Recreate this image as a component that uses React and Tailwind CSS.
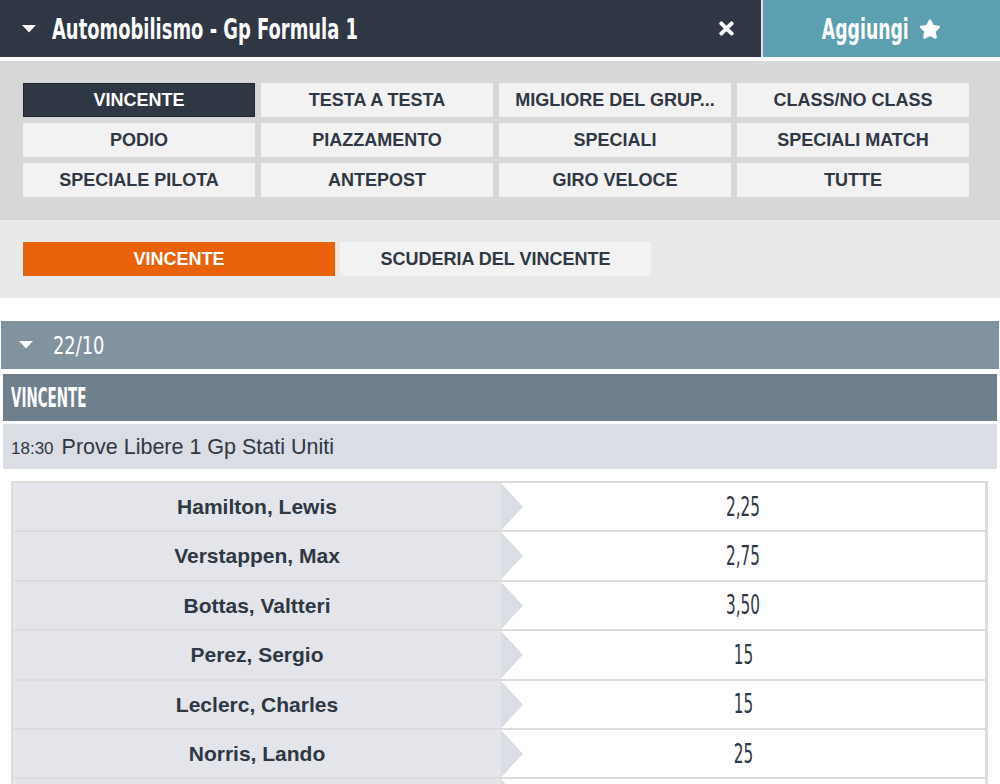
import { FaTimes, FaStar } from 'react-icons/fa';

const narrow = "font-['Liberation_Sans_Narrow','DejaVu_Sans_Condensed',sans-serif]";
const sans = "font-['Liberation_Sans',Arial,sans-serif]";

const markets = [
  'VINCENTE', 'TESTA A TESTA', 'MIGLIORE DEL GRUP...', 'CLASS/NO CLASS',
  'PODIO', 'PIAZZAMENTO', 'SPECIALI', 'SPECIALI MATCH',
  'SPECIALE PILOTA', 'ANTEPOST', 'GIRO VELOCE', 'TUTTE',
];

const runners = [
  { name: 'Hamilton, Lewis', odd: '2,25' },
  { name: 'Verstappen, Max', odd: '2,75' },
  { name: 'Bottas, Valtteri', odd: '3,50' },
  { name: 'Perez, Sergio', odd: '15' },
  { name: 'Leclerc, Charles', odd: '15' },
  { name: 'Norris, Lando', odd: '25' },
  { name: '', odd: '' },
];

const Caret = () => (
  <svg width="14" height="8" viewBox="0 0 14 8" className="shrink-0">
    <path d="M0 0 L14 0 L7 7.5 Z" fill="#fff" />
  </svg>
);

const RunnerRow = ({ name, odd }) => (
  <div className="flex h-[49.4px] border-b-2 border-[#dcdcdc]">
    <div className={`w-[488px] bg-[#e3e5ea] flex items-center justify-center text-[21px] font-bold text-[#2e3743] ${sans}`}>
      {name}
    </div>
    <div className="relative flex-1 bg-white flex items-center justify-center">
      <svg className="absolute left-0 top-0 h-full w-[22px]" viewBox="0 0 22 48" preserveAspectRatio="none">
        <path d="M0 0 L22 24 L0 48 Z" fill="#dadde3" />
      </svg>
      <span className={`inline-block scale-x-[0.85] scale-y-[1.35] text-[20px] text-[#2e3743] ${narrow}`}>{odd}</span>
    </div>
  </div>
);

export default function App() {
  return (
    <div className="w-[1000px] h-[784px] overflow-hidden bg-white">
      {/* top bar */}
      <div className="flex h-[57px] bg-[#2e3743]">
        <div className="flex-1 flex items-center pl-[22px] pr-[24px]">
          <Caret />
          <span className={`ml-[16px] inline-block origin-left scale-x-[0.83] scale-y-[1.2] text-[24px] font-bold text-white whitespace-nowrap ${narrow}`}>
            Automobilismo - Gp Formula 1
          </span>
          <FaTimes className="ml-auto text-white" size={21} />
        </div>
        <div className="w-[239px] border-l-2 border-[#dce6ea] bg-[#5b9fb0] flex items-center justify-center">
          <span className={`-mx-[11px] inline-block scale-x-[0.8] scale-y-[1.2] text-[24px] font-bold text-white ${narrow}`}>Aggiungi</span>
          <FaStar className="ml-[10px] text-white" size={22} />
        </div>
      </div>

      {/* market groups */}
      <div className="mt-[4px] bg-[#d6d7d9] pt-[22px] pb-[23px] pl-[23px] pr-[31px]">
        <div className="grid grid-cols-4 gap-x-[6px] gap-y-[6px]">
          {markets.map((m, i) => (
            <div
              key={m}
              className={`h-[34px] flex items-center justify-center text-[18px] font-bold ${sans} ${
                i === 0 ? 'bg-[#2e3743] text-white border border-[#1f262f]' : 'bg-[#f2f2f2] text-[#2e3743]'
              }`}
            >
              {m}
            </div>
          ))}
        </div>
      </div>

      {/* sub markets */}
      <div className="bg-[#e8e9e9] pt-[22px] pb-[22px] pl-[23px] flex gap-[5px]">
        <div className={`w-[312px] h-[34px] bg-[#e8620a] text-white flex items-center justify-center text-[18px] font-bold ${sans}`}>
          VINCENTE
        </div>
        <div className={`w-[311px] h-[34px] bg-[#f2f2f2] text-[#2e3743] flex items-center justify-center text-[18px] font-bold ${sans}`}>
          SCUDERIA DEL VINCENTE
        </div>
      </div>

      {/* date header */}
      <div className="mt-[23px] mx-[1px] h-[48px] bg-[#8293a0] flex items-center pl-[18px]">
        <Caret />
        <span className={`ml-[20px] inline-block origin-left scale-x-[0.9] scale-y-[1.1] text-[22px] text-white ${narrow}`}>22/10</span>
      </div>

      <div className="mt-[5px] mx-[3px] h-[47px] bg-[#6f7f8c] flex items-center pl-[8px]">
        <span className={`inline-block origin-left scale-x-[0.68] scale-y-[1.2] text-[22px] font-bold text-white ${narrow}`}>VINCENTE</span>
      </div>

      <div className={`mt-[3px] mx-[3px] h-[45px] bg-[#dadde3] flex items-center pl-[8px] text-[#2e3743] ${sans}`}>
        <p className="leading-none pt-[2px]">
          <span className="text-[17px]">18:30</span>
          <span className="ml-[8px] text-[21.5px]">Prove Libere 1 Gp Stati Uniti</span>
        </p>
      </div>

      {/* runners */}
      <div className="mt-[12px] ml-[11px] w-[977px] border-t-2 border-l-2 border-r-[3px] border-[#dcdcdc]">
        {runners.map((r, i) => (
          <RunnerRow key={i} {...r} />
        ))}
      </div>
    </div>
  );
}
